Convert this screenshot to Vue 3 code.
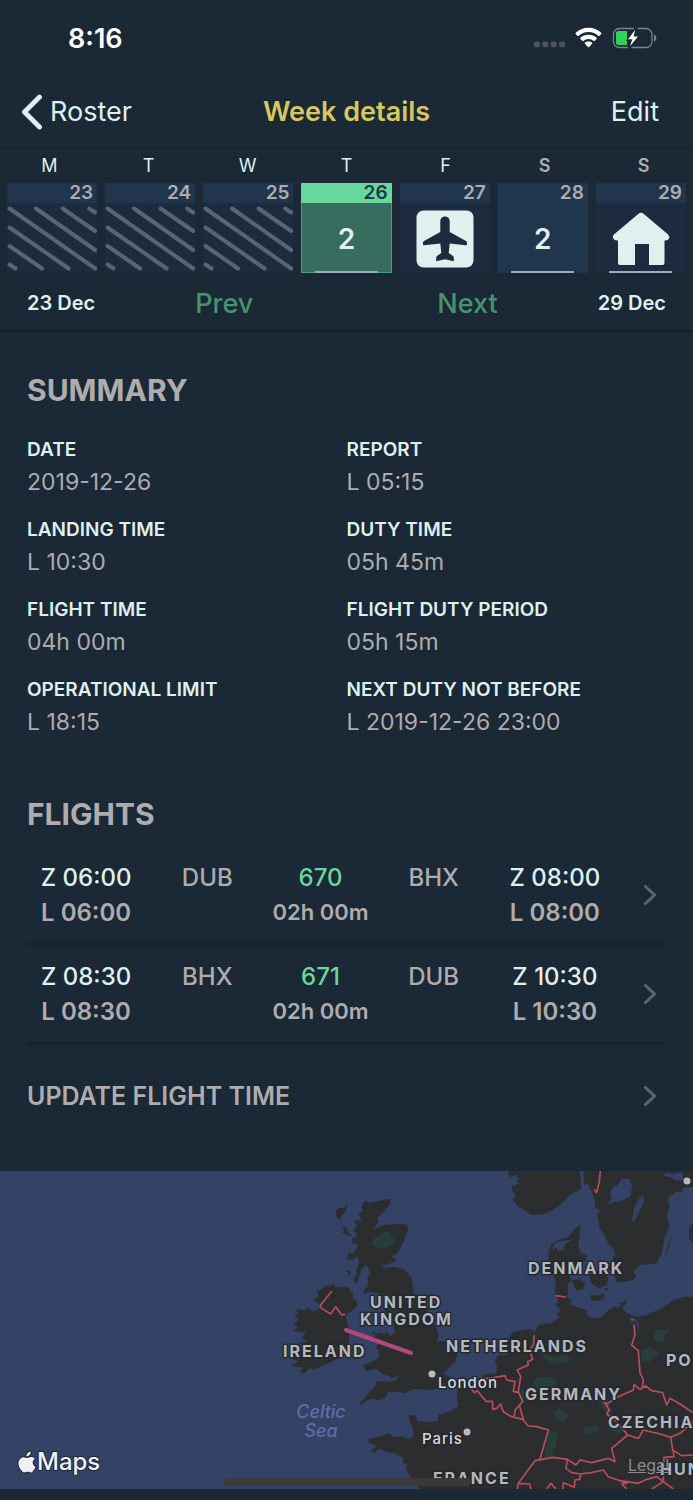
<template>
    <div class="screen">
        <div class="status-bar">
            <span class="clock">8:16</span>
            <div class="status-icons">
                <svg width="31" height="22" viewBox="0 0 31 22" fill="#4a5461">
                    <rect v-for="n in 4" :key="n" :x="(n - 1) * 8.4" y="14.5" width="5.8" height="5.8" rx="1.8" />
                </svg>
                <svg width="27" height="22" viewBox="0 0 27 22" fill="#fff">
                    <path d="M13.5 0.8C8.4 0.8 3.9 2.8 0.6 6l-.1.8 2.2 2.2.8 0c2.6-2.5 6.100-4 10-4s7.400 1.500 10 4l.8 0 2.200-2.200-.1-.8C23.100 2.800 18.600.8 13.500.8z" />
                    <path d="M13.500 7.700c-3.200 0-6.100 1.200-8.300 3.200v.8l2.300 2.200.8 0c1.400-1.200 3.200-2 5.200-2s3.800.8 5.200 2l.8 0 2.300-2.200v-.8c-2.200-2-5.100-3.200-8.300-3.200z" />
                    <path d="M13.500 14.500c-1.500 0-2.800.5-3.800 1.400v.7l3.400 3.600.8 0 3.400-3.600v-.7c-1-.9-2.300-1.400-3.800-1.400z" />
                </svg>
                <svg width="46" height="22" viewBox="0 0 46 22">
                    <path d="M22 1.500H7.500a6 6 0 0 0-6 6v7a6 6 0 0 0 6 6H16M19.500 20.500H34a6 6 0 0 0 6-6v-7a6 6 0 0 0-6-6h-8.500" fill="none" stroke="#7b838c" stroke-width="1.300" />
                    <path d="M42 7.500c1.700.5 2.300 2 2.300 3.500s-.6 3-2.300 3.500z" fill="#7b838c" />
                    <path d="M6.500 4H15v8.500l-1 1 1 1V18H6.500a2.500 2.500 0 0 1-2.500-2.500v-9A2.500 2.500 0 0 1 6.500 4z" fill="#30d158" />
                    <path d="M23.300 2.800 16 12.200h4.300L18 19.200l8-9.800h-4.500z" fill="#fff" />
                </svg>
            </div>
        </div>

        <header class="nav-bar">
            <button class="nav-button back" type="button">
                <svg width="20" height="36" viewBox="0 0 20 36">
                    <path d="M17.500 3 2.500 18l15 15" fill="none" stroke="currentColor" stroke-width="4.800" stroke-linecap="round" />
                </svg>
                <span>Roster</span>
            </button>
            <h1>Week details</h1>
            <button class="nav-button edit" type="button">Edit</button>
        </header>

        <section class="week">
            <div class="weekdays">
                <span v-for="(day, index) in days" :key="index" :class="{ weekend: index > 4 }">{{ day.letter }}</span>
            </div>
            <div class="days">
                <button v-for="day in days" :key="day.date" type="button" class="day" :class="day.style">
                    <span class="day-date">{{ day.date }}</span>
                    <svg v-if="day.type === 'past'" class="stripes" viewBox="0 0 90 70" preserveAspectRatio="none">
                        <path d="M2.500 5.500 88 65.500M29 5.500 88 47M55.500 5.500 88 28M82 5.500l6 4M2.500 24.500l59 41M2.500 43 35 65.500M2.500 61.500l6 4" />
                    </svg>
                    <span v-else class="day-body">
                        <svg v-if="day.type === 'plane'" width="58" height="58" viewBox="0 0 58 58">
                            <rect x="0.500" y="0.500" width="57" height="57" rx="7" fill="#def1ee" />
                            <path d="M29 6.500c-2.800 0-4.700 2-4.700 4.700V22L8 31c-.8.500-1 1-1 1.800v1.500c0 .8.500 1.100 1.300.9L24.300 33.500l1 9.500-4.300 3c-.6.400-.8.900-.8 1.500v3.700l8.800-2 8.800 2v-3.700c0-.6-.2-1.100-.8-1.500L32.700 43l1-9.500 16 1.700c.8.200 1.300-.1 1.300-.9v-1.500c0-.8-.2-1.300-1-1.800L33.700 22V11.200c0-2.700-1.900-4.700-4.700-4.700z" fill="#1c2c3e" />
                        </svg>
                        <svg v-else-if="day.type === 'home'" width="58" height="54" viewBox="0 0 58 54">
                            <path d="M26.500 1.700c1.500-1.200 3.500-1.200 5 0L55.500 22c3.500 3 1.500 7-3 6.500V51a2 2 0 0 1-2 2H37V32H23v21H8a2 2 0 0 1-2-2V28.500c-4.500.5-7-3.500-3.500-6.500z" fill="#def1ee" />
                        </svg>
                        <span v-else class="count">2</span>
                    </span>
                    <span v-if="day.marked" class="marker"></span>
                </button>
            </div>
            <div class="week-nav">
                <span>23 Dec</span>
                <button type="button">Prev</button>
                <button type="button" class="next">Next</button>
                <span>29 Dec</span>
            </div>
        </section>

        <main>
            <h2>SUMMARY</h2>
            <dl class="summary">
                <div v-for="item in summary" :key="item.label">
                    <dt>{{ item.label }}</dt>
                    <dd>{{ item.value }}</dd>
                </div>
            </dl>

            <h2 class="flights-title">FLIGHTS</h2>
            <a v-for="flight in flights" :key="flight.number" href="#" class="flight">
                <span class="times">
                    <span class="zulu">Z {{ flight.departure }}</span>
                    <b>L {{ flight.departure }}</b>
                </span>
                <span class="airport">{{ flight.from }}</span>
                <span class="times">
                    <span class="number">{{ flight.number }}</span>
                    <b class="duration">{{ flight.duration }}</b>
                </span>
                <span class="airport">{{ flight.to }}</span>
                <span class="times">
                    <span class="zulu">Z {{ flight.arrival }}</span>
                    <b>L {{ flight.arrival }}</b>
                </span>
                <svg class="chevron" width="12" height="20" viewBox="0 0 12 20"><path d="m1.500 1.500 9 8.500-9 8.500" /></svg>
            </a>

            <button type="button" class="update">
                <span>UPDATE FLIGHT TIME</span>
                <svg class="chevron" width="12" height="20" viewBox="0 0 12 20"><path d="m1.500 1.500 9 8.500-9 8.500" /></svg>
            </button>
        </main>

        <div class="map">
            <svg class="map-canvas" viewBox="0 0 693 318" preserveAspectRatio="xMidYMid slice">
                <g transform="scale(0.33333)">
                    <!-- British Isles and the continent -->
                    <g class="land" transform="translate(810 -18)">
                        <path d="M285 107 300 113 325 108 362 101 360 118 335 148 320 160 328 168 308 192 345 180 372 178 410 178 416 192 400 232 385 262 365 275 380 282 375 292 350 298 330 306 350 308 375 306 405 315 425 340 430 372 432 385 460 400 470 430 500 490 507 515 498 530 520 528 555 545 562 568 555 590 535 610 520 625 545 640 545 655 515 668 480 675 430 672 405 685 385 680 355 680 345 700 325 706 305 700 285 710 270 722 272 712 256 717 275 708 300 680 315 665 320 648 340 650 375 648 390 630 365 640 350 630 335 628 330 618 315 612 290 618 278 602 305 590 325 580 328 560 318 550 325 532 305 520 320 512 305 507 308 498 320 508 330 502 345 508 350 498 360 515 375 500 370 470 345 440 340 400 325 385 300 380 285 388 280 378 295 360 292 340 302 322 290 300 275 310 262 352 254 355 250 345 262 325 257 320 268 290 260 275 245 285 240 278 252 262 265 240 248 235 246 220 262 215 250 195 262 185 252 168 275 165 265 145 278 140 275 125Z" />
                        <path d="m196 140 9-12 15 0 12-12-4 24-12 10-8 16-8-11ZM218 180l10 5 8 20 12 7-13 0-20-10 8-4ZM235 262l13 6 7 10-20 7-3-6ZM228 315l17 5-10 14 0-10ZM215 185l5 6-2 4Z" />
                        <path d="m140 372 10 4 15-14 15 2 10-8 8 12 17-3 25 3 0 14 10 3-2 15 14 7-2 18-17 15-15 10 4 25 6 25-2 40-11 30-30 15-20 10-25 10-20 10-10-7-15 17-15-3 10-14-40-6 25-12-20-10 25-20 20-12-22-13 27-5-20-10 13-18-38-4 15-13-15-5 20-18-18-7 13-10-7-12 27 2 10-7 15 12 20-10-5-15-15-7 15-13Z" />
                        <path d="M450 972 440 955 418 930 408 910 412 900 400 895 400 880 375 865 350 862 330 850 310 865 305 855 320 842 295 832 295 822 320 818 355 805 370 815 400 815 412 822 430 815 428 790 418 765 418 750 438 752 442 768 470 772 505 768 502 750 545 738 565 722 560 690 565 670 600 660 640 640 635 630 680 625 680 600 675 590 685 570 710 570 705 540 725 505 740 498 780 492 795 500 805 480 825 475 840 478 855 465 868 460 862 445 873 435 858 420 866 405 855 390 858 350 835 300 835 262 843 240 865 225 895 215 915 190 933 180 930 200 925 245 932 265 948 270 950 285 930 295 905 310 910 325 898 330 905 345 892 360 895 380 890 395 905 405 900 420 920 425 950 435 955 455 975 460 995 455 1015 435 1035 425 1060 430 1070 445 1100 455 1130 450 1175 430 1210 405 1245 395 1269 395 1269 972Z" />
                    </g>
                    <!-- Scandinavia and the Danish islands -->
                    <g class="land" transform="translate(1440 -18)">
                        <path d="M85 18 88 40 100 50 95 70 105 90 98 105 115 125 145 140 147 148 160 150 190 148 220 135 245 115 270 90 303 72 305 60 303 40 310 60 325 58 335 80 345 110 345 130 362 135 352 150 358 185 375 215 385 235 400 250 408 268 398 275 400 290 370 300 400 325 410 350 430 352 460 345 470 335 460 320 480 300 530 295 545 265 555 215 570 180 560 155 570 120 562 100 590 80 609 80 605 68 639 65 639 18Z" />
                        <path d="m275 345 25-3 15 13-5 17-20 5-8-15ZM325 330l40-15 20 25-5 20-25 10-20-15ZM330 390l25 2 15-8 3 14-18 10-20-3ZM418 410l10 3 8-8 4 10-10 8-5 10-8-6 5-6ZM374 370l12-2-8 10ZM577 205l-22 80 5-35ZM639 175l-12 15 0 30 12 15Z" />
                    </g>
                    <g class="water" transform="translate(1440 -18)">
                        <path d="m380 122 20-12 20 0 30-15 6-35-8-18-23-2-10 20-15 5-10 20 5 15ZM455 170l7-40 18-35 12-3-2 23-15 30-10 23ZM548 30l15-6 20 4 22-8 5 18 12 2-20 8-15-2-10-8-15-3ZM300 18l10 0 3 55-10 10ZM88 38l22-10 0 10 10 2-12 8 12 6-20 10ZM218 245l12-14 15-3 35-5-22 12-8 20-15 2-8-12-8 16ZM446 460l25 2-3 16 12 16-5-24-20 0Z" />
                    </g>
                    <g class="forest" transform="translate(810 -18)">
                        <path d="m305 238 8-20 18-6 6-10 22 0 6 12 12 14-12 15-20 8-30-5ZM350 388l12 2-5 10ZM350 425l20 0 15 15-20 10Z" />
                    </g>
                    <g class="forest" transform="translate(1440 477)">
                        <path d="m160 155 15-15 50 2 5 20-35 15-20 8ZM225 243l15-8 24 22-12 20-26-6ZM310 295l40-10 14 15-50 15ZM205 302l30 4-8 40-10 35-25 8ZM185 70l45 12 30-10 12 22-40 8-40-15ZM350 190l30 15 15 35-10 15-25-30ZM380 270l45 30-5 15-35-20ZM525 0l45 0-15 15-5 25-30-8ZM485 60l25-8 30 20-35 25-20-5ZM125 180l15 0-5 35-15-10Z" />
                    </g>
                    <g class="borders">
                        <path transform="translate(810 -18)" d="M186 378 150 422 155 430 182 447 197 425 215 450 226 448" />
                        <path transform="translate(1440 -18)" d="M361 18 358 50 350 83 342 73M226 392 258 396M454 463h6M462 478l2 20" />
                        <path transform="translate(1440 477)" d="M163 15 160 45 148 60 158 88 143 95 145 105 112 120 122 140 115 185 128 215 105 240 103 258M-28 172-20 165 5 147 40 143 75 137 80 150 105 155 100 185 115 187M-28 172-18 188-8 182 18 214 38 214 38 238 50 235 62 222 70 245 95 260 128 268 145 288 170 290 205 300 180 388M130 268 118 225M463 3 465 15 455 45 475 62 480 128 490 150 487 175M370 215 380 222 415 200 460 180 462 163 480 178 497 168 515 182 548 188 560 225 570 205 600 222 639 248M375 220 388 240 380 252 410 275 443 315 475 325 490 300 540 312 572 322 600 310 639 275M443 315 395 355 405 395 385 385 335 398 300 390 288 405 262 388 220 382 165 392 115 460 112 477M262 388 258 415 275 428 300 432 335 428 370 420 385 440 420 452 475 460 500 448 530 440 550 455 580 477M572 322 578 360 605 377 639 375M580 365 582 380 552 382 550 430 550 455 515 477M115 460 150 462 152 477M200 477 213 460 228 477M248 477 250 458 283 472 285 450 300 448 302 432M420 452 440 460 425 462 440 477" />
                    </g>
                </g>
                <path class="route" d="M346 159 411 182" />
                <g class="places">
                    <circle cx="432" cy="203" r="3.500" />
                    <circle cx="467" cy="261" r="3.500" />
                    <circle cx="687" cy="10" r="3.500" />
                </g>
                <g class="countries">
                    <text v-for="place in countries" :key="place.name" :x="place.x" :y="place.y">{{ place.name }}</text>
                </g>
                <g class="cities">
                    <text x="438" y="217">London</text>
                    <text x="422" y="273">Paris</text>
                </g>
                <g class="seas">
                    <text x="321" y="247">Celtic</text>
                    <text x="321" y="266">Sea</text>
                </g>
            </svg>
            <div class="maps-logo">
                <svg width="18" height="22" viewBox="0 0 18 22">
                    <path d="M12.800.5c.1 1.400-.5 2.600-1.300 3.500-.8.900-2 1.500-3.100 1.400-.1-1.300.5-2.600 1.300-3.400C10.500 1.100 11.800.6 12.800.5zM17 7.700c-1.500.9-2.300 2.200-2.300 3.900 0 2 1.200 3.500 2.800 4.100-.5 1.500-1.300 2.900-2.200 4-.8 1-1.500 1.800-2.700 1.800-1.100 0-1.600-.7-3.100-.7-1.500 0-2 .7-3.100.7-1.200 0-2-.9-2.900-2.100C1.700 17.600.5 15.200.5 12.500.5 8.500 3 6.200 5.600 6.200c1.400 0 2.600.9 3.500.9.900 0 2.300-1 4-1 1.400 0 3 .5 3.900 1.600z" />
                </svg>
                <span>Maps</span>
            </div>
            <a href="#" class="legal">Legal</a>
            <div class="home-indicator"></div>
        </div>
    </div>
</template>

<script setup>
import { ref } from 'vue';

const days = ref([
    { letter: 'M', date: 23, type: 'past' },
    { letter: 'T', date: 24, type: 'past' },
    { letter: 'W', date: 25, type: 'past' },
    { letter: 'T', date: 26, type: 'count', style: 'selected', marked: true },
    { letter: 'F', date: 27, type: 'plane' },
    { letter: 'S', date: 28, type: 'count', style: 'duty', marked: true },
    { letter: 'S', date: 29, type: 'home', marked: true },
]);

const summary = ref([
    { label: 'DATE', value: '2019-12-26' },
    { label: 'REPORT', value: 'L 05:15' },
    { label: 'LANDING TIME', value: 'L 10:30' },
    { label: 'DUTY TIME', value: '05h 45m' },
    { label: 'FLIGHT TIME', value: '04h 00m' },
    { label: 'FLIGHT DUTY PERIOD', value: '05h 15m' },
    { label: 'OPERATIONAL LIMIT', value: 'L 18:15' },
    { label: 'NEXT DUTY NOT BEFORE', value: 'L 2019-12-26 23:00' },
]);

const flights = ref([
    { number: 670, from: 'DUB', to: 'BHX', departure: '06:00', arrival: '08:00', duration: '02h 00m' },
    { number: 671, from: 'BHX', to: 'DUB', departure: '08:30', arrival: '10:30', duration: '02h 00m' },
]);

const countries = [
    { name: 'DENMARK', x: 528, y: 103 },
    { name: 'UNITED', x: 370, y: 137 },
    { name: 'KINGDOM', x: 360, y: 154 },
    { name: 'IRELAND', x: 283, y: 186 },
    { name: 'NETHERLANDS', x: 446, y: 181 },
    { name: 'PO', x: 666, y: 195 },
    { name: 'GERMANY', x: 525, y: 229 },
    { name: 'CZECHIA', x: 608, y: 257 },
    { name: 'HUN', x: 660, y: 304 },
    { name: 'FRANCE', x: 433, y: 313 },
];
</script>

<style>
body {
    background: #1b2836;
}
</style>

<style scoped>
.screen {
    background: #1b2836;
    color: #def1ee;
    font-family: Inter, "Liberation Sans", sans-serif;
    padding-bottom: 11px;
}

button {
    background: none;
    border: 0;
    padding: 0;
    color: inherit;
    font: inherit;
    cursor: pointer;
}

a {
    color: inherit;
    text-decoration: none;
}

svg {
    display: block;
}

.status-bar {
    display: flex;
    justify-content: space-between;
    align-items: center;
    height: 76px;
    padding: 0 35px 0 68px;
}

.clock {
    color: #fff;
    font-size: 27px;
    font-weight: 600;
}

.status-icons {
    display: flex;
    gap: 10px;
}

.nav-bar {
    display: grid;
    grid-template-columns: 1fr auto 1fr;
    align-items: center;
    height: 71px;
    padding: 0 22px;
    border-bottom: 1px solid #152029;
}

.nav-bar h1 {
    margin: 0;
    color: #d3c95c;
    font-size: 27px;
    font-weight: 600;
}

.nav-button {
    font-size: 27px;
}

.back {
    display: flex;
    align-items: center;
    gap: 8px;
    justify-self: start;
}

.edit {
    justify-self: end;
    padding-right: 12px;
}

.week {
    border-bottom: 2px solid #121d27;
}

.weekdays {
    display: grid;
    grid-template-columns: repeat(7, 1fr);
    line-height: 35px;
    font-size: 18px;
    text-align: center;
}

.weekend {
    color: #aeacad;
    font-weight: 600;
}

.days {
    display: grid;
    grid-template-columns: repeat(7, 1fr);
    gap: 8px;
    padding: 0 7px;
}

.day {
    display: flex;
    flex-direction: column;
    position: relative;
    height: 90px;
    background: #1c2c3e;
}

.day-date {
    align-self: stretch;
    background: #20364d;
    color: #aeacad;
    padding-right: 4px;
    font-size: 19px;
    font-weight: 600;
    line-height: 20px;
    text-align: right;
}

.day-body {
    display: flex;
    flex: 1;
    align-items: center;
    justify-content: center;
    align-self: stretch;
    padding-top: 2px;
}

.stripes {
    width: 100%;
    height: 70px;
    fill: none;
    stroke: #5b6570;
    stroke-width: 4;
    stroke-linecap: round;
}

.count {
    font-size: 28px;
    font-weight: 600;
}

.duty {
    background: #20364d;
}

.selected {
    background: #376c5f;
    box-shadow: inset 0 0 0 1px #4a9e78;
}

.selected .day-date {
    background: #68d79b;
    color: #20364d;
}

.marker {
    position: absolute;
    bottom: 0;
    left: 15%;
    right: 15%;
    height: 2px;
    background: #9caac4;
}

.week-nav {
    display: flex;
    align-items: center;
    gap: 100px;
    padding: 13px 27px 9px;
    font-size: 20px;
    font-weight: 600;
    line-height: 35px;
}

.week-nav button {
    color: #46946f;
    font-size: 27px;
    font-weight: 500;
}

.week-nav .next {
    margin-left: auto;
}

main {
    padding: 38px 27px 23px;
}

h2 {
    margin: 0;
    color: #aeacad;
    font-size: 30px;
    font-weight: 700;
    line-height: 40px;
}

.summary {
    display: grid;
    grid-template-columns: 1fr 1fr;
    row-gap: 16px;
    margin: 26px 0 54px;
}

.summary dt {
    font-size: 19px;
    font-weight: 600;
    line-height: 28px;
}

.summary dd {
    margin: 0;
    color: #aeacad;
    font-size: 23px;
    line-height: 36px;
}

.flights-title {
    margin-bottom: 12px;
}

.flight {
    display: grid;
    grid-template-columns: 118fr 124fr 102fr 124fr 118fr 42px;
    padding: 14px 10px 13px 0;
    border-bottom: 2px solid #142029;
    color: #aeacad;
    font-size: 24px;
    font-weight: 500;
    line-height: 35px;
    text-align: center;
}

.times {
    display: flex;
    flex-direction: column;
    white-space: nowrap;
}

.times b {
    font-weight: 600;
}

.times .duration {
    font-size: 22px;
}

.zulu {
    color: #def1ee;
}

.number {
    color: #68d79b;
}

.chevron {
    align-self: center;
    justify-self: end;
    fill: none;
    stroke: #5b6570;
    stroke-width: 3;
    stroke-linecap: round;
}

.update {
    display: flex;
    align-items: center;
    justify-content: space-between;
    width: 100%;
    height: 104px;
    padding-right: 10px;
    color: #aeacad;
    font-size: 25px;
    font-weight: 600;
}

.map {
    position: relative;
    overflow: hidden;
    background: #344365;
}

.map-canvas {
    width: 100%;
    height: 318px;
}

.land {
    fill: #2b2d2f;
}

.water {
    fill: #344365;
}

.forest {
    fill: #283e3a;
}

.borders {
    fill: none;
    stroke: #bb4d5a;
    stroke-width: 5;
    stroke-linejoin: round;
}

.route {
    stroke: #b3497a;
    stroke-width: 4;
    stroke-linecap: round;
}

.places {
    fill: #b9babd;
}

.map text {
    stroke: #25282c;
    stroke-width: 3px;
    stroke-linejoin: round;
    paint-order: stroke;
}

.countries {
    fill: #b4b7be;
    font-size: 16px;
    font-weight: 700;
    letter-spacing: 2px;
}

.cities {
    fill: #d8d9dc;
    font-size: 15px;
    font-weight: 500;
    letter-spacing: 1px;
}

.map .seas text {
    fill: #5f6ca6;
    stroke: none;
    font-size: 18px;
    font-style: italic;
    font-weight: 500;
    text-anchor: middle;
}

.maps-logo {
    display: flex;
    align-items: center;
    gap: 1px;
    position: absolute;
    left: 18px;
    bottom: 12px;
    color: #f0f1f5;
    font-size: 24px;
    font-weight: 500;
    line-height: 30px;
    -webkit-text-stroke: 2px #1f2735;
    paint-order: stroke;
}

.maps-logo svg {
    overflow: visible;
    fill: #f0f1f5;
    stroke: #1f2735;
    stroke-width: 2;
    paint-order: stroke;
}

.legal {
    position: absolute;
    right: 24px;
    bottom: 14px;
    color: #8b8d90;
    font-size: 16px;
    text-decoration: underline;
}

.home-indicator {
    position: absolute;
    left: 50%;
    bottom: 3px;
    width: 247px;
    height: 8px;
    border-radius: 4px;
    background: #3a3a3a;
    transform: translateX(-50%);
}
</style>
